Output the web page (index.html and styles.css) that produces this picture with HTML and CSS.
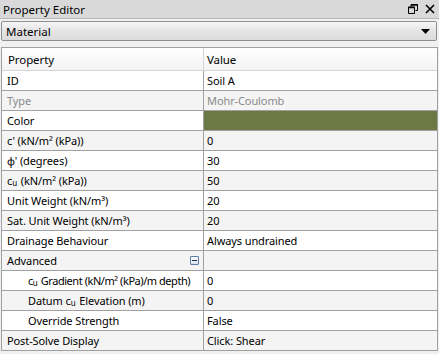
FILE: index.html
```html
<!DOCTYPE html>
<html lang="en">
<head>
  <meta charset="UTF-8" />
  <title>Property Editor</title>
  <link rel="stylesheet" href="styles.css">
</head>
<body>
  <div class="panel">
    <div class="titlebar">
      <span class="title">Property Editor</span>
      <span class="tools">
        <svg width="10" height="10" viewBox="0 0 10 10"><path d="M3 0.5h6.5v6h-2M3 0.5v2M0.5 3h6v6.5h-6z" fill="none" stroke="#000" stroke-width="1"/><path d="M3 1h6.5M0.5 3.5h6" stroke="#000" stroke-width="1.6"/></svg>
        <svg width="10" height="10" viewBox="0 0 10 10"><path d="M1 1l8 8M9 1l-8 8" stroke="#000" stroke-width="1.6"/></svg>
      </span>
    </div>
    <div class="combo">
      <span>Material</span>
      <svg width="9" height="5" viewBox="0 0 9 5"><path d="M0 0h9l-4.5 5z" fill="#000"/></svg>
    </div>
    <div class="grid">
      <div class="row head"><div class="cell">Property</div><div class="cell">Value</div></div>
      <div class="row"><div class="cell">ID</div><div class="cell">Soil A</div></div>
      <div class="row alt muted"><div class="cell">Type</div><div class="cell">Mohr-Coulomb</div></div>
      <div class="row"><div class="cell">Color</div><div class="cell swatch"></div></div>
      <div class="row alt"><div class="cell">c' (kN/m² (kPa))</div><div class="cell">0</div></div>
      <div class="row"><div class="cell">ϕ' (degrees)</div><div class="cell">30</div></div>
      <div class="row alt"><div class="cell">c<sub>u</sub> (kN/m² (kPa))</div><div class="cell">50</div></div>
      <div class="row"><div class="cell">Unit Weight (kN/m³)</div><div class="cell">20</div></div>
      <div class="row alt"><div class="cell">Sat. Unit Weight (kN/m³)</div><div class="cell">20</div></div>
      <div class="row"><div class="cell">Drainage Behaviour</div><div class="cell">Always undrained</div></div>
      <div class="row alt"><div class="cell group"><span>Advanced</span><span class="toggle"></span></div><div class="cell"></div></div>
      <div class="row"><div class="cell sub tight">c<sub>u</sub> Gradient (kN/m² (kPa)/m depth)</div><div class="cell">0</div></div>
      <div class="row alt"><div class="cell sub">Datum c<sub>u</sub> Elevation (m)</div><div class="cell">0</div></div>
      <div class="row"><div class="cell sub">Override Strength</div><div class="cell">False</div></div>
      <div class="row alt"><div class="cell">Post-Solve Display</div><div class="cell">Click: Shear</div></div>
    </div>
  </div>
</body>
</html>
```

FILE: styles.css
```css
body {
  margin: 0;
  font-family: 'Noto Sans', 'Open Sans', sans-serif;
  font-size: 11px;
  color: #000;
  background: #f0f0f0;
}
.panel {
  width: 439px;
  height: 354px;
  overflow: hidden;
  background: #f0f0f0;
}
.titlebar {
  height: 18px;
  display: flex;
  align-items: center;
  justify-content: space-between;
  padding: 0 4px 0 3px;
  background: #d9d9d9;
  border-bottom: 1px solid #b9b9b9;
  font-size: 11.5px;
}
.titlebar .tools {
  display: flex;
  gap: 7px;
  align-items: center;
}
.combo {
  margin: 2px 2px 0 1px;
  height: 18px;
  border: 1px solid #8e8f8f;
  border-radius: 2px;
  background: linear-gradient(#f6f6f6, #e4e4e4 50%, #dcdcdc);
  display: flex;
  align-items: center;
  justify-content: space-between;
  padding: 0 6px 0 4px;
  font-size: 11.5px;
}
.grid {
  margin: 6px 1px 0 1px;
  border-top: 1px solid #a0a0a0;
  border-left: 1px solid #a0a0a0;
  border-right: 1px solid #a0a0a0;
  letter-spacing: -0.1px;
}
.row {
  display: grid;
  grid-template-columns: 201px 1fr;
  height: 19px;
  line-height: 20px;
  border-bottom: 1px solid #a0a0a0;
  background: #fff;
}
.row.alt {
  background: #f4f4f4;
}
.row.head {
  height: 22px;
  line-height: 23px;
  background: linear-gradient(#fff, #f3f4f6);
  border-bottom: 1px solid #d5d5d5;
  font-size: 11.5px;
}
.row.muted {
  color: #8a8a8a;
}
.cell {
  padding-left: 5px;
  white-space: nowrap;
  overflow: hidden;
}
.cell + .cell {
  border-left: 1px solid #a0a0a0;
  padding-left: 3px;
}
.head .cell {
  padding-left: 6px;
}
.head .cell + .cell {
  border-left: 1px solid #d5d5d5;
  padding-left: 3px;
}
.cell.sub {
  padding-left: 26px;
}
.cell.tight {
  letter-spacing: -0.45px;
}
.cell.group {
  display: flex;
  align-items: center;
  justify-content: space-between;
  padding-right: 4px;
}
.swatch {
  background: #6d7945;
}
sub {
  font-size: 8px;
  vertical-align: -1px;
  line-height: 0;
  margin-right: 1px;
}
.toggle {
  width: 7px;
  height: 7px;
  border: 1px solid #5a7ea8;
  border-radius: 1px;
  background: linear-gradient(#fff, #d8e2ee);
  position: relative;
}
.toggle::after {
  content: "";
  position: absolute;
  left: 1px;
  right: 1px;
  top: 3px;
  height: 1px;
  background: #1f2f4a;
}
```
